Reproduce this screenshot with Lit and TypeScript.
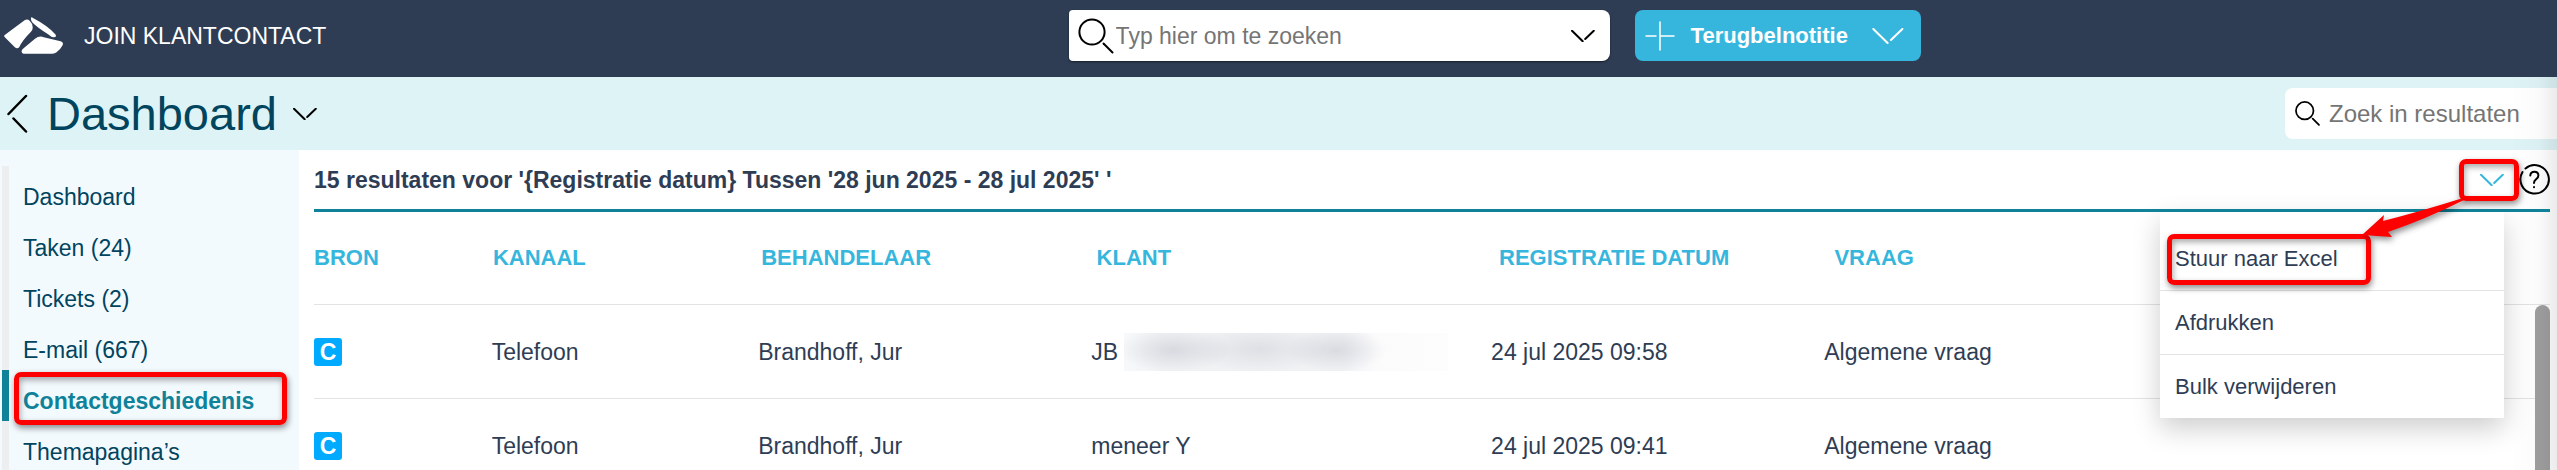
import { LitElement, html, css } from "lit";
import { customElement } from "lit/decorators.js";
import { classMap } from "lit/directives/class-map.js";

const NAV = [
  { label: "Dashboard", active: false },
  { label: "Taken (24)", active: false },
  { label: "Tickets (2)", active: false },
  { label: "E-mail (667)", active: false },
  { label: "Contactgeschiedenis", active: true },
  { label: "Themapagina’s", active: false },
];

const COLUMNS = ["Bron", "Kanaal", "Behandelaar", "Klant", "Registratie datum", "Vraag"];

const ROWS = [
  { source: "C", channel: "Telefoon", agent: "Brandhoff, Jur", client: "JB", masked: true, date: "24 jul 2025 09:58", question: "Algemene vraag" },
  { source: "C", channel: "Telefoon", agent: "Brandhoff, Jur", client: "meneer Y", masked: false, date: "24 jul 2025 09:41", question: "Algemene vraag" },
];

const MENU = [
  { label: "Stuur naar Excel", marked: true },
  { label: "Afdrukken", marked: false },
  { label: "Bulk verwijderen", marked: false },
];

const chevron = html`<svg class="chevron" viewBox="0 0 24 12" aria-hidden="true">
  <path d="M1 .7 L11.700 11.300 M14.200 9 L22.800 .7" />
</svg>`;

const magnifier = html`<svg class="magnifier" viewBox="0 0 36 36" aria-hidden="true">
  <circle cx="14" cy="14" r="12.600" />
  <path d="M25.500 25.500 L34.500 34.500" />
</svg>`;

@customElement("app-root")
export class AppRoot extends LitElement {
  static styles = css`
    :host {
      display: flex;
      flex-direction: column;
      height: 100vh;
      overflow: hidden;
      position: relative;
      background: #fff;
      color: #2e3d54;
      font: 23px/28px "Liberation Sans", Arial, sans-serif;
    }
    /* soft shade along the right window edge */
    :host::after {
      content: "";
      position: absolute;
      top: 77px;
      right: 0;
      bottom: 0;
      width: 48px;
      pointer-events: none;
      background: linear-gradient(90deg, transparent, rgba(0, 0, 0, 0.015) 60%, rgba(0, 0, 0, 0.08));
    }
    * { box-sizing: border-box; }
    button, input { font: inherit; color: inherit; border: 0; background: none; padding: 0; margin: 0; }
    button { cursor: pointer; display: flex; align-items: center; }
    input { min-width: 0; outline: 0; }
    input::placeholder { color: #757575; opacity: 1; }
    a { color: inherit; text-decoration: none; }
    svg { fill: none; stroke: currentColor; stroke-width: 2; stroke-linecap: round; flex: none; display: block; }
    .chevron { width: 24px; height: 12px; }

    .topbar {
      flex: none;
      height: 77px;
      padding: 10px 4px 16px;
      display: grid;
      grid-template-columns: 32fr auto 19fr;
      background: #2e3d54;
      color: #fff;
    }
    .brand { display: flex; align-items: center; gap: 20px; white-space: nowrap; }
    .logo { width: 60px; height: 37px; fill: #fff; stroke: none; }
    .actions { display: flex; gap: 25px; }
    .search { display: flex; align-items: center; background: #fff; color: #000; }
    .search input { flex: 1; }
    .search.main {
      width: 541px;
      border-radius: 4px 8px 8px 4px;
      padding: 0 15px 0 9px;
      gap: 2px;
      box-shadow: 0 1px 2px rgba(0, 0, 0, 0.5);
    }
    .search.main .magnifier { width: 36px; height: 36px; }
    .callback {
      padding: 0 17px 0 10px;
      border-radius: 8px;
      background: #36b6dd;
      font-size: 22px;
      font-weight: 700;
      gap: 16px;
    }
    .callback .plus { width: 30px; height: 30px; stroke-width: 1.5; }
    .callback .chevron { width: 32px; height: 16px; margin-left: 8px; stroke-width: 1.5; }

    .titlebar {
      flex: none;
      height: 73px;
      padding-left: 7px;
      display: flex;
      align-items: center;
      background: #def3f6;
      color: #00445e;
    }
    .back { color: #000; margin-right: 19px; }
    .back svg { width: 21px; height: 39px; stroke-width: 2.5; }
    h1 { margin: 0; font-size: 47px; line-height: 56px; font-weight: 400; }
    .pick { color: #000; margin-left: 16px; }
    .search.local {
      margin-left: auto;
      width: 272px;
      height: 51px;
      border-radius: 8px 0 0 8px;
      padding-left: 10px;
      gap: 9px;
      font-size: 24px;
    }
    .search.local .magnifier { width: 25px; height: 25px; stroke-width: 2.5; }

    .body { flex: 1; min-height: 0; display: flex; }
    .side { flex: none; width: 299px; padding: 16px 0 0 2px; background: #f3fafe; color: #00445e; }
    .side a {
      display: flex;
      align-items: center;
      height: 51px;
      padding: 11px 0 0 14px;
      border-left: 7px solid #eceef0;
      position: relative;
    }
    .side .active { border-color: #0f8299; color: #0f8299; font-weight: 700; }

    /* red call-out frames */
    .side .active::after, .more::after, .marked::after {
      content: "";
      position: absolute;
      border: 5px solid #f00;
      border-radius: 7px;
      box-shadow: 1px 3px 6px rgba(0, 0, 0, 0.45), inset 1px 3px 6px rgba(0, 0, 0, 0.35);
      pointer-events: none;
    }
    .side .active::after { inset: 2px 12px -4px 5px; z-index: 1; }
    .more::after { inset: 0; }
    .marked::after { inset: 7px 133px 5px 7px; }

    .content { flex: 1; min-width: 0; padding: 0 7px 0 15px; display: flex; flex-direction: column; }
    .results {
      flex: none;
      height: 62px;
      display: flex;
      align-items: center;
      position: relative;
      z-index: 2;
      border-bottom: 3px solid #0f8299;
    }
    h2 { margin: 0 auto 0 0; font-size: 23px; line-height: 28px; font-weight: 700; white-space: nowrap; }
    .more { position: relative; width: 60px; height: 42px; padding-left: 21px; color: #36b6dd; }
    .help { color: #000; }
    .help svg { width: 31px; height: 31px; }
    .pointer {
      position: absolute;
      right: 86px;
      top: 47px;
      width: 102px;
      height: 42px;
      fill: #f00;
      stroke: none;
      overflow: visible;
      filter: drop-shadow(2px 3px 3px rgba(0, 0, 0, 0.45));
      pointer-events: none;
    }

    .list { flex: 1; min-height: 0; position: relative; }
    table, thead, tbody { display: block; }
    tbody { padding-right: 15px; }
    tr {
      display: grid;
      grid-template-columns: 8% 12% 15% 18% 15% 1fr;
      align-items: center;
      height: 94px;
      border-bottom: 1px solid #e2e3e5;
      text-align: left;
      white-space: nowrap;
    }
    thead tr { height: 93px; }
    th, td { padding: 0; }
    th { color: #36b6dd; font-size: 22px; text-transform: uppercase; }
    .badge {
      display: flex;
      align-items: center;
      justify-content: center;
      width: 28px;
      height: 28px;
      border-radius: 3px;
      background: #00aaff;
      color: #fff;
      font-weight: 700;
    }
    .client { display: flex; align-items: center; gap: 6px; }
    .mask {
      width: 324px;
      height: 38px;
      background:
        radial-gradient(58px 22px at 50px 17px, rgba(190, 194, 204, 0.5), transparent),
        radial-gradient(70px 24px at 135px 16px, rgba(190, 194, 204, 0.38), transparent),
        radial-gradient(50px 22px at 212px 17px, rgba(190, 194, 204, 0.48), transparent),
        linear-gradient(90deg, #f8f9fa, #f1f2f4 12%, #f1f2f4 68%, #fbfbfc 78%, #fdfdfd);
    }
    .thumb {
      position: absolute;
      top: 93px;
      right: 0;
      bottom: 0;
      width: 15px;
      border-radius: 8px 8px 0 0;
      background: #9e9e9e;
    }
    .menu {
      position: absolute;
      top: 0;
      right: 46px;
      width: 344px;
      margin: 0;
      padding: 15px 0 0;
      list-style: none;
      background: #fff;
      font-size: 22px;
      box-shadow: 0 10px 26px rgba(0, 0, 0, 0.2);
    }
    .menu li { position: relative; height: 64px; border-bottom: 1px solid #e2e3e5; }
    .menu li:last-child { height: 63px; border-bottom: 0; }
    .menu button { width: 100%; height: 100%; padding-left: 15px; }
  `;

  render() {
    return html`
      <header class="topbar">
        <div class="brand">
          <svg class="logo" viewBox="12 44 178 110" aria-hidden="true">
            <path d="M13 98 Q11 102 15 105 L44 134 Q51 140 57 134 Q66 114 92 88 Q98 82 97 74 Q96 62 88 55 Q81 49 73 54 Z" />
            <path d="M92 47 Q93 43 98 47 Q142 70 165 96 Q169 104 160 104 Q152 104 144 96 Q112 76 97 61 Q91 55 92 47 Z" />
            <path d="M64 146 Q64 141 70 137 L104 109 Q116 99 130 104 L180 116 Q190 119 186 128 Q180 140 168 149 Q163 153 156 153 H70 Q64 153 64 146 Z" />
          </svg>
          <span>JOIN KLANTCONTACT</span>
        </div>
        <div class="actions">
          <div class="search main">
            ${magnifier}
            <input type="text" aria-label="Zoeken" placeholder="Typ hier om te zoeken" />
            <button aria-label="Zoekopties">${chevron}</button>
          </div>
          <button class="callback">
            <svg class="plus" viewBox="0 0 30 30" aria-hidden="true">
              <path d="M15 1 V29 M1 15 H11 M15 15 H29" />
            </svg>
            Terugbelnotitie ${chevron}
          </button>
        </div>
      </header>

      <div class="titlebar">
        <button class="back" aria-label="Terug">
          <svg viewBox="0 0 21 39" aria-hidden="true"><path d="M19 2 L1.500 20 M6.500 24.500 L19 37.500" /></svg>
        </button>
        <h1>Dashboard</h1>
        <button class="pick" aria-label="Kies dashboard">${chevron}</button>
        <div class="search local">
          ${magnifier}
          <input type="text" aria-label="Zoek in resultaten" placeholder="Zoek in resultaten" />
        </div>
      </div>

      <main class="body">
        <nav class="side">
          ${NAV.map((item) => html`<a href="#" class=${classMap({ active: item.active })}>${item.label}</a>`)}
        </nav>
        <section class="content">
          <div class="results">
            <h2>15 resultaten voor '{Registratie datum} Tussen '28 jun 2025 - 28 jul 2025' '</h2>
            <button class="more" aria-label="Meer acties">${chevron}</button>
            <button class="help" aria-label="Help">
              <svg viewBox="0 0 31 31" aria-hidden="true">
                <path d="M6.500 4.500 A14.200 14.200 0 1 1 3.500 8" />
                <path d="M11.300 11.500 Q11.600 7.800 15.400 7.800 Q19.400 7.800 19.400 11.500 Q19.400 13.800 17 15.300 Q15 16.600 15 19" />
                <path d="M15 23 V23.300" />
              </svg>
            </button>
            <svg class="pointer" viewBox="0 0 102 42" aria-hidden="true">
              <path d="M0 38 L22 18 L21 24 Q60 14 101 1 L102 3 Q64 22 26 35 L30 40 Z" />
            </svg>
          </div>
          <div class="list">
            <table>
              <thead>
                <tr>${COLUMNS.map((name) => html`<th scope="col">${name}</th>`)}</tr>
              </thead>
              <tbody>
                ${ROWS.map(
                  (row) => html`<tr>
                    <td><span class="badge">${row.source}</span></td>
                    <td>${row.channel}</td>
                    <td>${row.agent}</td>
                    <td><div class="client">${row.client}${row.masked ? html`<span class="mask"></span>` : null}</div></td>
                    <td>${row.date}</td>
                    <td>${row.question}</td>
                  </tr>`
                )}
              </tbody>
            </table>
            <div class="thumb"></div>
            <ul class="menu">
              ${MENU.map((item) => html`<li class=${classMap({ marked: item.marked })}><button>${item.label}</button></li>`)}
            </ul>
          </div>
        </section>
      </main>
    `;
  }
}
